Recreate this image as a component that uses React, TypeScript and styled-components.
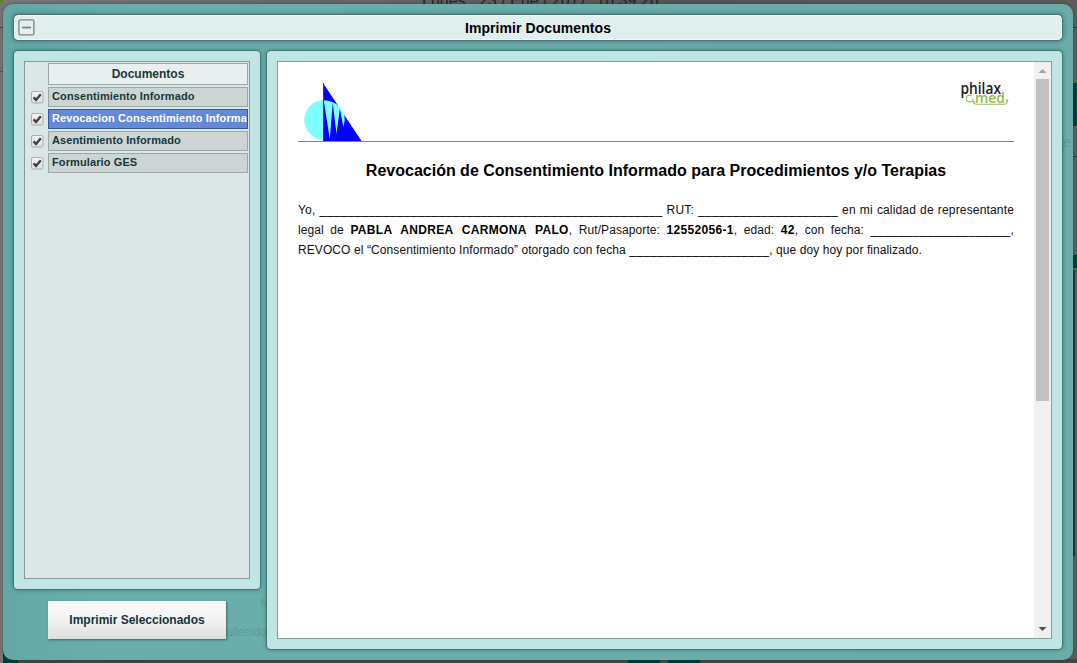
import React from "react";
import styled, { createGlobalStyle } from "styled-components";

const GlobalStyle = createGlobalStyle`
  * { box-sizing: border-box; }
  body {
    margin: 0;
    overflow: hidden;
    font-family: "Liberation Sans", Arial, sans-serif;
  }
`;

const Screen = styled.div`
  display: grid;
  width: 1077px;
  height: 663px;
  overflow: hidden;
  background: linear-gradient(90deg, #777 0, #6a6a6a 25%, #555 60%, #5c5c5c 100%);
  > * { grid-area: 1 / 1; }
`;

const Backdrop = styled.div`
  display: grid;
  grid-template-columns: 3px 1fr 4px;
  grid-template-rows: 659px 4px;
  color: #262626;
`;

const Edge = styled.div`
  display: flex;
  flex-direction: column;
`;

const Block = styled.div<{ $h: number; $c?: string }>`
  height: ${(p) => p.$h}px;
  flex: none;
  background: ${(p) => p.$c ?? "transparent"};
`;

const Clock = styled.div`
  height: 16px;
  margin: -8px 0 0 419px;
  font-size: 16px;
  line-height: 18px;
  white-space: pre;
`;

const Middle = styled.div`
  display: flex;
  flex-direction: column;
  justify-content: space-between;
`;

const CornerTile = styled.div`
  width: 15px;
  height: 12px;
  background: #003c38;
`;

const BottomEdge = styled.div`
  grid-column: 2 / 4;
  display: flex;
  background: #454545;
`;

const Tile = styled.div<{ $w: number; $on?: boolean }>`
  width: ${(p) => p.$w}px;
  background: ${(p) => (p.$on ? "#003c38" : "transparent")};
`;

const Dialog = styled.div`
  position: relative;
  isolation: isolate;
  height: 656px;
  margin: 4px 4px 3px 3px;
  padding: 11px 11px 10px;
  border-radius: 10px;
  display: flex;
  flex-direction: column;
  gap: 11px;
  background: linear-gradient(90deg, #62a8a5 0, #6aaeab 9%, #69aca9 100%);
  box-shadow: 0 0 3px rgba(40, 40, 40, 0.6);
`;

const GhostText = styled.span<{ $x: number; $y: number; $size: number }>`
  position: absolute;
  z-index: -1;
  left: ${(p) => p.$x}px;
  top: ${(p) => p.$y}px;
  font-size: ${(p) => p.$size}px;
  line-height: 1;
  color: #5b9e9b;
`;

const TitleBar = styled.header`
  height: 25px;
  flex: none;
  display: grid;
  grid-template-columns: 17px 1fr 17px;
  align-items: center;
  padding: 0 3px;
  border: 1px solid #f2f9f8;
  border-radius: 4px;
  background: #e0eeed;
  box-shadow: 0 0 0 1px rgba(60, 95, 95, 0.45), 0 0 5px 1px rgba(40, 75, 75, 0.6);
  color: #000;
`;

const Title = styled.h2`
  margin: 0;
  font-size: 14px;
  line-height: 18px;
  letter-spacing: 0.07px;
  text-align: center;
`;

const CollapseButton = styled.button`
  width: 17px;
  height: 17px;
  padding: 0;
  border: 0;
  background: none;
  svg { display: block; }
`;

const Columns = styled.div`
  display: flex;
  gap: 7px;
`;

const Sidebar = styled.aside`
  width: 246px;
  display: flex;
  flex-direction: column;
  align-items: flex-start;
  gap: 12px;
`;

const Panel = styled.section<{ $w: number; $h: number }>`
  width: ${(p) => p.$w}px;
  height: ${(p) => p.$h}px;
  flex: none;
  padding: 10px;
  border-radius: 4px;
  background: #c1e5e4;
  box-shadow: 0 0 0 1px rgba(25, 80, 80, 0.3), 0 0 4px 0 rgba(15, 65, 65, 0.75);
`;

const DocumentList = styled.div`
  width: 226px;
  height: 518px;
  padding: 1px;
  border: 1px solid #879b9a;
  background: #dae7e6;
  display: flex;
  flex-direction: column;
  gap: 2px;
`;

const ListHeader = styled.div`
  height: 22px;
  margin-left: 22px;
  border: 1px solid #99a8a7;
  background: #e9efee;
  font-size: 12px;
  font-weight: bold;
  line-height: 20px;
  text-align: center;
  color: #18383a;
`;

const ListRow = styled.div`
  display: flex;
  height: 20px;
`;

const CheckCell = styled.div`
  width: 22px;
  flex: none;
  padding: 4px 0 0 5px;
  svg { display: block; }
`;

const RowLabel = styled.div<{ $selected?: boolean }>`
  width: 200px;
  padding-left: 3px;
  overflow: hidden;
  white-space: nowrap;
  border: 1px solid ${(p) => (p.$selected ? "#3555a0" : "#9aa9a8")};
  background: ${(p) => (p.$selected ? "#6489d6" : "#ccd5d3")};
  color: ${(p) => (p.$selected ? "#fff" : "#18383a")};
  font-size: 11px;
  font-weight: bold;
  line-height: 16px;
  letter-spacing: 0.11px;
`;

const PrintButton = styled.button`
  width: 178px;
  height: 38px;
  margin-left: 34px;
  padding: 0;
  border: 0;
  background: linear-gradient(#fbfbfb, #f2f2f2 50%, #dedee0);
  box-shadow: 1px 1px 2px rgba(30, 80, 80, 0.7);
  font: bold 12px "Liberation Sans", Arial, sans-serif;
  color: #14343a;
`;

const Viewer = styled.div`
  width: 775px;
  height: 578px;
  display: flex;
  border: 1px solid #869e9e;
  background: #fff;
`;

const Sheet = styled.article`
  width: 756px;
  padding: 20px 20px 0;
`;

const Letterhead = styled.div`
  height: 60px;
  display: flex;
  justify-content: space-between;
  border-bottom: 1px solid #858585;
  svg { display: block; overflow: visible; }
`;

const SheetTitle = styled.h1`
  margin: 19px 0 0;
  font-size: 16px;
  line-height: 20px;
  text-align: center;
  white-space: nowrap;
  color: #000;
`;

const Body = styled.div`
  margin-top: 19px;
  font-size: 12px;
  line-height: 20px;
  color: #111;
`;

const Line = styled.div<{ $justify?: boolean; $tracking?: number }>`
  height: 20px;
  text-align-last: ${(p) => (p.$justify ? "justify" : "left")};
  letter-spacing: ${(p) => p.$tracking ?? 0.09}px;
  b {
    color: #000;
    letter-spacing: 0.32px;
    word-spacing: 2px;
  }
`;

const Blank = styled.span`
  letter-spacing: 0.326px;
  color: #000;
`;

const ScrollTrack = styled.div`
  width: 17px;
  flex: none;
  display: flex;
  flex-direction: column;
  align-items: center;
  background: #f0f0f0;
`;

const ScrollArrow = styled.div`
  height: 17px;
  svg { display: block; }
`;

const ScrollThumb = styled.div`
  width: 13px;
  height: 322px;
  margin-bottom: auto;
  background: #c1c1c1;
`;

const Checkbox = () => (
  <svg width="13" height="13" viewBox="0 0 13 13">
    <defs>
      <linearGradient id="boxFill" x1="0" y1="0" x2="0" y2="1">
        <stop offset="0" stopColor="#f4f4f4" />
        <stop offset="1" stopColor="#dedede" />
      </linearGradient>
    </defs>
    <rect x="0.5" y="0.5" width="11.5" height="11.5" rx="1.5" fill="url(#boxFill)" stroke="#a8adad" />
    <path d="M2.6 6.4L5 8.9L9.8 3.2" fill="none" stroke="#404040" strokeWidth="2.4" />
  </svg>
);

const SailLogo = () => (
  <svg width="66" height="59" viewBox="298 82 66 59">
    <path d="M323 83V141H361.5Z" fill="#0000ff" />
    <path d="M324 100A19.7 20 0 0 0 324 140Z" fill="#80ffff" />
    <path
      d="M323.7 100.3Q333 100.5 339 106.5L344.5 115Q345.2 121 343.4 127L339.8 109L336.5 134L332.7 103L329.8 139Z"
      fill="#80ffff"
    />
    <path d="M323.5 83V141" stroke="#2929ff" />
  </svg>
);

const PhilaxLogo = () => (
  <svg width="54" height="32" viewBox="960 82 54 32">
    <text x="960.5" y="94.3" fontFamily="Open Sans, sans-serif" fontSize="15.5" fontWeight="600" textLength="40.5" lengthAdjust="spacingAndGlyphs" fill="#202022">philax</text>
    <text x="975" y="102.5" fontFamily="Open Sans, sans-serif" fontSize="14" fontWeight="600" textLength="30" lengthAdjust="spacingAndGlyphs" fill="#8dbd4e">med</text>
    <g fill="none" stroke="#94c45a" strokeWidth="1.1">
      <circle cx="969.7" cy="98.5" r="3.4" strokeDasharray="18 3" />
      <path d="M972.5 101.3Q974 101.8 975 101.8M973.5 101.8Q973.5 104.3 977 104.3H1004Q1007 104.3 1007.3 101.5" />
      <circle cx="1007" cy="100.5" r="0.8" fill="#94c45a" />
    </g>
  </svg>
);

const documents = [
  { name: "Consentimiento Informado" },
  { name: "Revocacion Consentimiento Informado", selected: true },
  { name: "Asentimiento Informado" },
  { name: "Formulario GES" },
];

const blank = (n: number) => "_".repeat(n);

export default function App() {
  return (
    <>
      <GlobalStyle />
      <Screen>
        <Backdrop>
          <Edge>
            <Block $h={3} $c="#668023" />
            <Block $h={24} $c="#777575" />
            <Block $h={1} $c="#444" />
            <Block $h={43} $c="#777575" />
            <Block $h={1} $c="#555" />
            <Block $h={587} $c="#777575" />
          </Edge>
          <Middle>
            <Clock>{"Lunes,  23 / Ene / 2017  16:39:26"}</Clock>
            <CornerTile />
          </Middle>
          <Edge>
            <Block $h={27} />
            <Block $h={1} $c="#333" />
            <Block $h={55} />
            <Block $h={43} $c="#003c38" />
            <Block $h={30} />
            <Block $h={1} $c="#333" />
            <Block $h={98} />
            <Block $h={13} $c="#003c38" />
            <Block $h={2} />
            <Block $h={286} $c="linear-gradient(90deg, #333 50%, #5c5c5c 50%)" />
          </Edge>
          <Block $h={4} $c="#777575" />
          <BottomEdge>
            <Tile $w={15} $on />
            <Tile $w={610} />
            <Tile $w={32} $on />
            <Tile $w={8} />
            <Tile $w={32} $on />
          </BottomEdge>
        </Backdrop>
        <Dialog>
          <GhostText $x={223} $y={622} $size={12}>allecido</GhostText>
          <GhostText $x={257} $y={594} $size={12}>N</GhostText>
          <GhostText $x={1060} $y={131} $size={14}>e</GhostText>
          <TitleBar>
            <CollapseButton aria-label="Contraer">
              <svg width="17" height="17" viewBox="0 0 17 17">
                <rect x="0.9" y="0.9" width="15" height="15" rx="1.5" fill="#e6efee" stroke="#7d8282" strokeWidth="1.3" />
                <path d="M4 8.5H13" stroke="#7d8282" strokeWidth="1.8" />
              </svg>
            </CollapseButton>
            <Title>Imprimir Documentos</Title>
          </TitleBar>
          <Columns>
            <Sidebar>
              <Panel $w={246} $h={538}>
                <DocumentList>
                  <ListHeader>Documentos</ListHeader>
                  {documents.map((d) => (
                    <ListRow key={d.name}>
                      <CheckCell><Checkbox /></CheckCell>
                      <RowLabel $selected={d.selected}>{d.name}</RowLabel>
                    </ListRow>
                  ))}
                </DocumentList>
              </Panel>
              <PrintButton>Imprimir Seleccionados</PrintButton>
            </Sidebar>
            <Panel $w={795} $h={598}>
              <Viewer>
                <Sheet>
                  <Letterhead>
                    <SailLogo />
                    <PhilaxLogo />
                  </Letterhead>
                  <SheetTitle>Revocación de Consentimiento Informado para Procedimientos y/o Terapias</SheetTitle>
                  <Body>
                    <Line $justify $tracking={0.16}>
                      Yo, <Blank>{blank(49)}</Blank> RUT: <Blank>{blank(20)}</Blank> en mi calidad de representante
                    </Line>
                    <Line $justify>
                      legal de <b>PABLA ANDREA CARMONA PALO</b>, Rut/Pasaporte: <b>12552056-1</b>, edad: <b>42</b>, con fecha: <Blank>{blank(20)}</Blank>,
                    </Line>
                    <Line>
                      REVOCO el “Consentimiento Informado” otorgado con fecha <Blank>{blank(20)}</Blank>, que doy hoy por finalizado.
                    </Line>
                  </Body>
                </Sheet>
                <ScrollTrack>
                  <ScrollArrow>
                    <svg width="17" height="17" viewBox="0 0 17 17"><path d="M4.5 11L8.5 7L12.5 11Z" fill="#a3a3a3" /></svg>
                  </ScrollArrow>
                  <ScrollThumb />
                  <ScrollArrow>
                    <svg width="17" height="17" viewBox="0 0 17 17"><path d="M4.5 6L8.5 10L12.5 6Z" fill="#505050" /></svg>
                  </ScrollArrow>
                </ScrollTrack>
              </Viewer>
            </Panel>
          </Columns>
        </Dialog>
      </Screen>
    </>
  );
}
